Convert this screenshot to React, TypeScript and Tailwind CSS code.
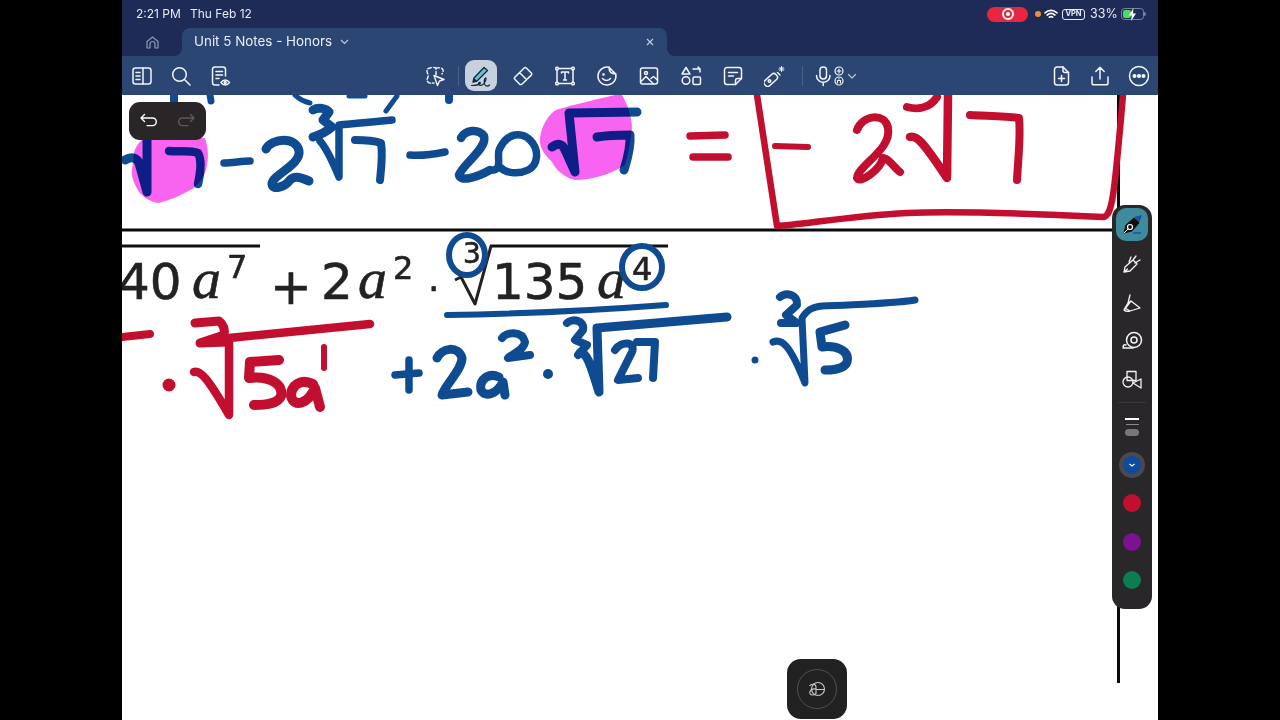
import React from "react";

const Ic = ({ w = 22, h = 22, vb = "0 0 22 22", sw = 1.5, children }: { w?: number; h?: number; vb?: string; sw?: number; children: React.ReactNode }) => (
  <svg width={w} height={h} viewBox={vb} fill="none" stroke="currentColor" strokeWidth={sw} strokeLinecap="round" strokeLinejoin="round">
    {children}
  </svg>
);

const Slot = ({ children, className = "w-[42px]" }: { children: React.ReactNode; className?: string }) => (
  <div className={`flex items-center justify-center shrink-0 ${className}`}>{children}</div>
);

function Toolbar() {
  return (
    <div className="relative h-[39px] flex items-center bg-[#2b4673] text-[#f1f5fa] shrink-0">
      <Slot className="w-[39px]">
        <Ic><rect x="2" y="3" width="18" height="16" rx="2.5" /><path d="M12 3v16M5 7.5h4M5 11h4M5 14.5h4" /></Ic>
      </Slot>
      <Slot className="w-[39px]">
        <Ic><circle cx="9.5" cy="9.5" r="6.8" /><path d="M14.5 14.5 20 20" /></Ic>
      </Slot>
      <Slot className="w-[39px]">
        <Ic><path d="M10 20H6a2.5 2.5 0 0 1-2.5-2.5v-13A2.5 2.5 0 0 1 6 2h8a2.5 2.5 0 0 1 2.5 2.5V11" /><path d="M7 6.5h6.5M7 10h6.5M7 13.5h3" /><path d="M12 17.5s1.8-2.5 4.2-2.5 4.3 2.5 4.3 2.5-1.9 2.5-4.3 2.5-4.2-2.5-4.2-2.5z" /><circle cx="16.2" cy="17.5" r="1" /></Ic>
      </Slot>
      <Slot className="ml-[174.5px] w-[42px]">
        <Ic sw={1.4}><path strokeDasharray="3.5 2.2" d="M12 10V4c0-2-4-2-6-1S3 3 3 6s2 3 1 6-2 3 0 5 3 1 6 1" /><path strokeDasharray="3.5 2.2" d="M12 3c3 0 6-1 7 2 .5 2-.5 3-1 4" /><path d="M10 10.5l10 4-4.500 1.500-2 4.500z" /></Ic>
      </Slot>
      <div className="ml-[2px] w-px h-[20px] bg-[#48618b]" />
      <div className="ml-[6px] w-[32px] h-[31px] rounded-[9px] bg-[#c6d0de] flex items-center justify-center">
        <svg width="24" height="24" viewBox="0 0 24 24" fill="none">
          <path d="M4 18l1-4L15 3.500l3.500 3L8 17z" fill="#67c3d0" stroke="#14233f" strokeWidth="1.300" strokeLinejoin="round" />
          <path d="M4 18l1-4 3 3z" fill="#14233f" />
          <path d="M2.500 21.500c3 0 7-.5 8.500-2s-2-1.500-1.500.5 3 1.500 4.500.5c2-1.500 4-7 2.500-6.500s-2 6 0 7.500c1.500 1 3 .5 4-.5" stroke="#14233f" strokeWidth="1.200" strokeLinecap="round" />
        </svg>
      </div>
      <Slot className="ml-[5px] w-[42px]">
        <Ic><path d="M8 19.500 2.800 14.300a1.500 1.500 0 0 1 0-2.100L12.200 3a1.500 1.500 0 0 1 2.100 0l5 5a1.500 1.500 0 0 1 0 2.100L9.600 19.500zM7.500 7.500l7 7" /></Ic>
      </Slot>
      <Slot>
        <Ic><rect x="3" y="3.500" width="16" height="15" /><rect x="1.800" y="2.300" width="2.400" height="2.400" rx=".8" fill="#2b4673" /><rect x="17.800" y="2.300" width="2.400" height="2.400" rx=".8" fill="#2b4673" /><rect x="1.800" y="17.300" width="2.400" height="2.400" rx=".8" fill="#2b4673" /><rect x="17.800" y="17.300" width="2.400" height="2.400" rx=".8" fill="#2b4673" /><path d="M7.500 8V7h7v1M11 7v8M9.500 15h3" /></Ic>
      </Slot>
      <Slot>
        <Ic><path d="M13 2.300A9 9 0 1 0 19.700 9" /><path d="M13 2.300c0 4 2.500 6.700 6.700 6.700L13 2.300z" /><circle cx="7.500" cy="9.500" r=".6" fill="currentColor" /><path d="M6.500 13.500c2 2.500 6 2.500 8 0" /></Ic>
      </Slot>
      <Slot>
        <Ic><rect x="2.500" y="3" width="17" height="16" rx="2" /><circle cx="8" cy="8" r="1.500" /><path d="m2.500 17 5.500-5.500 7.500 7.500M13 13.500l2.500-2 4 3.500" /></Ic>
      </Slot>
      <Slot>
        <Ic><path d="M6 2.500 10 9H2zM20 4h-7m7 0-2-2m2 2v3" /><circle cx="6" cy="15.500" r="3.800" /><rect x="13" y="12" width="7.500" height="7.500" rx="1.500" /></Ic>
      </Slot>
      <Slot>
        <Ic><path d="M13.500 19.500H5A2.500 2.500 0 0 1 2.500 17V5A2.500 2.500 0 0 1 5 2.500h12A2.500 2.500 0 0 1 19.500 5v8.500z" /><path d="M13.500 19.500v-4a2 2 0 0 1 2-2h4M6.500 7.500h9M6.500 11h5" /></Ic>
      </Slot>
      <Slot>
        <Ic><rect x="-1" y="12" width="15" height="7" rx="2.800" transform="rotate(-42 6 15)" /><circle cx="5.500" cy="16" r="1.300" /><path d="M13.500 7.500l2.500 2.500" /><path d="M17.500 1.500v5M15 4h5M15.700 2.200l3.600 3.600M19.300 2.200l-3.600 3.600" strokeWidth="1" /></Ic>
      </Slot>
      <div className="ml-[6px] w-px h-[20px] bg-[#48618b]" />
      <div className="ml-[11px] flex items-center">
        <Ic w={18} h={22} vb="0 0 18 22"><rect x="6" y="2" width="6.500" height="12" rx="3.200" /><path d="M2.500 10.500c0 9 13.500 9 13.500 0M9.200 18v2.500" /></Ic>
        <Ic w={14} h={22} vb="0 0 14 22" sw={1.200}><circle cx="7" cy="6" r="4" /><path d="M5 6h4M7 4v4" /><circle cx="7" cy="16" r="4" /><path d="M5.500 18v-2.500h3V18M7 13.500v.5" /></Ic>
        <Ic w={12} h={22} vb="0 0 12 22" sw={1.200}><path d="m2.500 9.500 3.500 3.500 3.500-3.500" className="opacity-70" /></Ic>
      </div>
      <div className="ml-auto flex items-center">
        <Slot className="w-[39px]">
          <Ic><path d="M13 2H7a2.500 2.500 0 0 0-2.500 2.500v13A2.500 2.500 0 0 0 7 20h9a2.500 2.500 0 0 0 2.500-2.500V7.500z" /><path d="M13 2v3.500a2 2 0 0 0 2 2h3.500M11.500 10.500v6M8.500 13.500h6" /></Ic>
        </Slot>
        <Slot className="w-[39px]">
          <Ic><path d="M3 12v6a1.800 1.800 0 0 0 1.800 1.800h12.400A1.800 1.800 0 0 0 19 18v-6M11 14V2.500M6.800 6.500 11 2.300l4.200 4.200" /></Ic>
        </Slot>
        <Slot className="w-[39px]">
          <Ic><circle cx="11" cy="11" r="9.500" /><circle cx="6.500" cy="11" r="1.300" fill="currentColor" /><circle cx="11" cy="11" r="1.300" fill="currentColor" /><circle cx="15.500" cy="11" r="1.300" fill="currentColor" /></Ic>
        </Slot>
      </div>
      <div className="absolute left-[360px] top-[38.500px] w-0 h-0 border-x-[5px] border-x-transparent border-t-[4px] border-t-[#2b4673]" />
    </div>
  );
}

const BLUE = "#0f4b90";
const RED = "#c20f2f";

const blue: [string, number][] = [
  ["M174,95 L174,102", 8],
  ["M210,95 L211,101", 7],
  ["M295,95 C300,100 305,102 310,103", 5],
  ["M349,96 L365,96", 5],
  ["M397,96 L386,111", 5],
  ["M449,95 L449,100", 8],
  ["M125,160 C132,156 137,158 139,163 L147,192 L147,140", 9],
  ["M169,151 C180,152 190,150 198,153 C202,160 200,175 198,184", 8.500],
  ["M224,163 C232,163 242,161 250,161", 7.500],
  ["M266,149 C272,138 296,136 299,151 C301,165 272,175 272,184 C272,190 284,188 290,180 C295,175 302,178 309,181", 9],
  ["M313,110 C318,107 326,108 329,112 L323,120 L332,127 C326,132 320,135 313,137", 9],
  ["M320,141 C328,150 334,165 339,177 L339,125 C355,123 375,122 392,120", 7.500],
  ["M355,140 C365,140 375,141 381,143 C383,155 381,170 380,180", 8],
  ["M410,155 C420,156 435,154 445,152", 7.500],
  ["M461,138 C465,130 478,128 484,136 C488,148 462,165 459,175 C460,182 476,178 490,170", 8.500],
  ["M490,170 C505,172 495,155 500,148 C508,132 522,132 530,140 C540,150 538,165 528,170 C518,175 505,173 500,167", 7.500],
  ["M552,147 C558,143 562,143 565,150 L575,172 L569,113 L637,112", 9],
  ["M597,137 C610,135 620,135 630,135 C631,148 627,160 624,170", 9],
  ["M447,315 C520,314 600,310 666,305", 6],
  ["M395,375 L419,373", 7.500],
  ["M409,360 L409,390", 7.500],
  ["M437,358 C442,348 458,345 462,358 C462,370 445,385 442,395 L468,392", 9],
  ["M499,377 C488,372 479,380 481,390 C485,398 497,394 503,382 L505,395", 9],
  ["M502,338 C506,332 522,330 525,342 C524,350 512,354 508,358 L530,355", 8],
  ["M567,323 C572,318 585,320 583,330 L575,340 L587,345 L578,355", 8],
  ["M580,353 C588,352 592,370 599,392 L597,328 L727,317", 9],
  ["M615,350 C622,340 636,342 632,352 L618,380 L638,378", 8],
  ["M637,342 L655,342 L653,378", 8],
  ["M780,297 C786,292 798,294 797,305 L786,315 L797,323 L781,323", 8],
  ["M773,342 C782,338 790,345 805,383 L802,318 C808,308 815,307 822,306 C860,304 890,304 915,300", 7],
  ["M845,325 L820,332 L822,347 C835,345 850,350 847,362 C845,368 835,370 825,370", 9],
];

const red: [string, number][] = [
  ["M690,136 L725,135", 7.500],
  ["M693,157 L728,157", 7.500],
  ["M757,95 L777,226 C800,225 850,216 907,213 C960,211 1040,214 1103,217 C1112,216 1114,200 1123,95", 6.500],
  ["M775,146 L808,147", 6],
  ["M857,130 C862,115 885,112 888,128 C892,150 858,165 857,178 C860,184 880,170 883,158 C888,158 895,168 900,172", 8],
  ["M907,107 C918,110 930,108 937,97", 8],
  ["M910,137 C916,135 922,140 947,178 L948,95", 8.500],
  ["M970,115 C985,116 1005,116 1019,118 C1021,135 1018,160 1017,180", 8],
  ["M122,337 L150,334", 8],
  ["M195,323 L219,321 C224,325 225,330 224,335 L200,343 L228,342", 9],
  ["M194,372 C200,370 208,378 229,415 L229,338 L370,324", 8.500],
  ["M279,360 L250,362 L249,378 C270,375 284,385 281,396 C278,404 265,405 254,405", 10],
  ["M313,384 C300,378 291,386 291,396 C294,408 308,404 315,388 L320,407", 10],
  ["M324,347 L324,368", 6],
];

function Canvas() {
  return (
    <div className="relative flex-1 bg-white overflow-hidden">
      <svg className="absolute inset-0 w-full h-full" viewBox="122 95 1036 625" fill="none" strokeLinecap="round" strokeLinejoin="round">
        <path d="M122,230 H1118" stroke="#0a0a0a" strokeWidth="3" strokeLinecap="butt" />
        <path d="M1118.500,95 V683" stroke="#0a0a0a" strokeWidth="3" strokeLinecap="butt" />
        <path d="M122,246 H260 M490,246 H668" stroke="#111" strokeWidth="3" strokeLinecap="butt" />
        <path d="M455,280 L461,277 L475,304 L491,246" stroke="#222" strokeWidth="3" strokeLinecap="butt" />
        <g fill="#222" stroke="#222" strokeWidth="0.6">
          <text x="118" y="299" className="font-['DejaVu_Sans'] text-[50px]">40</text>
          <text x="192" y="298" className="font-['Liberation_Serif'] italic text-[58px]">a</text>
          <text x="227" y="278" className="font-['DejaVu_Sans'] text-[32px]">7</text>
          <text x="270" y="304" className="font-['DejaVu_Sans'] text-[50px]">+</text>
          <text x="321" y="299" className="font-['DejaVu_Sans'] text-[50px]">2</text>
          <text x="358" y="298" className="font-['Liberation_Serif'] italic text-[58px]">a</text>
          <text x="393" y="279" className="font-['DejaVu_Sans'] text-[32px]">2</text>
          <text x="428" y="301" className="font-['DejaVu_Sans'] text-[36px]">·</text>
          <text x="463" y="263" className="font-['DejaVu_Sans'] text-[28px]">3</text>
          <text x="492" y="299" className="font-['DejaVu_Sans'] text-[50px]">135</text>
          <text x="597" y="298" className="font-['Liberation_Serif'] italic text-[58px]">a</text>
          <text x="632" y="280" className="font-['DejaVu_Sans'] text-[32px]">4</text>
        </g>
        <ellipse cx="467" cy="255" rx="18" ry="20" stroke={BLUE} strokeWidth="6" />
        <ellipse cx="642" cy="267" rx="20" ry="21" stroke={BLUE} strokeWidth="6" />
        {blue.map(([d, w], i) => <path key={i} d={d} stroke={BLUE} strokeWidth={w} />)}
        {red.map(([d, w], i) => <path key={i} d={d} stroke={RED} strokeWidth={w} />)}
        <circle cx="169" cy="385" r="6.500" fill={RED} />
        <circle cx="548" cy="374" r="5" fill={BLUE} />
        <circle cx="755" cy="360" r="3.500" fill={BLUE} />
        <path className="mix-blend-multiply" fill="#f864f0" d="M134,152 C138,142 142,138 150,138 L205,138 C209,150 208,158 207,165 C205,178 198,184 194,188 C180,196 170,200 159,203 C150,202 142,196 139,192 C135,185 131,178 132,170 Z" />
        <path className="mix-blend-multiply" fill="#f864f0" d="M540,138 C542,125 548,115 556,110 C575,104 595,100 615,95 L622,95 C628,105 632,118 632,128 C630,145 628,155 625,165 C610,175 590,180 575,180 C565,178 556,170 552,162 C545,155 539,148 540,138 Z" />
      </svg>

      <div className="absolute left-[7px] top-[7px] w-[77px] h-[38px] rounded-[11px] bg-[#2a2627] flex items-center justify-between px-[10px] text-white">
        <Ic w={20} h={20} vb="0 0 20 20" sw={1.400}><path d="M5.500 3.500 2 7 5.500 10.500M2 7h11.500a3.800 3.800 0 0 1 0 7.600H8" /></Ic>
        <span className="text-[#5d5a5b]">
          <Ic w={20} h={20} vb="0 0 20 20" sw={1.400}><path d="M14.500 3.500 18 7 14.500 10.500M18 7H6.500a3.800 3.800 0 0 0 0 7.600H12" /></Ic>
        </span>
      </div>

      <div className="absolute left-[990px] top-[110px] w-[40px] h-[404px] rounded-[13px] bg-[#29272a] flex flex-col items-center text-[#f4f4f4] pt-[3px]">
        <div className="w-[32px] h-[33px] rounded-[10px] bg-[#3d8b9d] flex items-center justify-center">
          <svg width="24" height="24" viewBox="0 0 24 24" fill="none">
            <path d="M14 4l8-2-3 8z" fill="#1c4f9c" />
            <path d="M4 20l2-8 8-7 5 5-7 8z" fill="#101010" stroke="#101010" />
            <circle cx="10" cy="14" r="2.500" fill="none" stroke="#fff" strokeWidth="1.200" />
            <path d="M4 20l4.500-4.500" stroke="#fff" strokeWidth="1" />
            <path d="M13 20h8" stroke="#1c4f9c" strokeWidth="1.500" />
          </svg>
        </div>
        <div className="mt-[7px] h-[31px] flex items-center">
          <Ic sw={1.300}><path d="M3 19l1-5 8-7 4 4-7 7zM3 19l3.500-3M8 9l2-5M12 7l3-4M14 10l5-3" /></Ic>
        </div>
        <div className="mt-[8px] h-[31px] flex items-center">
          <Ic sw={1.300}><path d="M3 18c2 2 6 1 6 1l10-3-9-7zM3 18l1-2 3-5 3-2M4 16l5 3M7 11 9 3" /></Ic>
        </div>
        <div className="mt-[7px] h-[31px] flex items-center">
          <Ic><circle cx="13" cy="10" r="7.500" /><circle cx="13" cy="10" r="3" /><path d="M2 18h10M3 18c-2-2 0-4 2-3" /></Ic>
        </div>
        <div className="mt-[8px] h-[31px] flex items-center">
          <Ic sw={1.300}><rect x="6" y="2.500" width="9" height="9" /><circle cx="7" cy="13" r="5" /><path d="M12 14l8-4v9z" /></Ic>
        </div>
        <div className="mt-[7px] w-[28px] h-px bg-[#38363a]" />
        <div className="mt-[15px] w-[14px] h-[2px] bg-white" />
        <div className="mt-[4px] w-[13px] h-px bg-[#8b8b8b]" />
        <div className="mt-[4px] w-[14px] h-[7px] rounded-full bg-[#77767a]" />
        <div className="mt-[16px] w-[26px] h-[26px] rounded-full bg-[#4a494e] flex items-center justify-center">
          <div className="w-[18px] h-[18px] rounded-full bg-[#0f4b9c] flex items-center justify-center">
            <svg width="8" height="8" viewBox="0 0 8 8" fill="none" stroke="#fff" strokeWidth="1.200"><path d="m1.500 3 2.500 2 2.500-2" /></svg>
          </div>
        </div>
        <div className="mt-[16px] w-[18px] h-[18px] rounded-full bg-[#c20f2f]" />
        <div className="mt-[21px] w-[18px] h-[18px] rounded-full bg-[#7b128f]" />
        <div className="mt-[20px] w-[18px] h-[18px] rounded-full bg-[#0d7c52]" />
      </div>

      <div className="absolute left-[665px] top-[564px] w-[60px] h-[60px] rounded-[14px] bg-[#212121] flex items-center justify-center">
        <div className="w-[40px] h-[40px] rounded-full border-[1.5px] border-[#505050] flex items-center justify-center">
          <svg width="20" height="18" viewBox="0 0 20 18" fill="none" stroke="#c8c8c8" strokeWidth="1.100">
            <circle cx="11" cy="9" r="6.500" />
            <path d="M2.500 6C4 3.500 9 3.500 9 7v7M9 9c-7-1-8 6-3.500 6 2 0 3.500-1 3.500-2.500M9 9.500h8.500" />
          </svg>
        </div>
      </div>
    </div>
  );
}

export default function App() {
  return (
    <div className="w-[1280px] h-[720px] bg-black flex justify-center overflow-hidden font-['Inter',sans-serif]">
      <div className="w-[1036px] h-full flex flex-col">
        <div className="h-[28px] bg-[#1e2b56] flex items-center text-[#e6eaf2] text-[12px] shrink-0">
          <span className="ml-[14px] w-[54px]">2:21 PM</span>
          <span>Thu Feb 12</span>
          <div className="ml-auto flex items-center">
            <div className="w-[41px] h-[15px] rounded-full bg-[#e8263f] flex items-center justify-center">
              <div className="w-[12px] h-[12px] rounded-full border-2 border-white flex items-center justify-center">
                <div className="w-[4px] h-[4px] rounded-full bg-white" />
              </div>
            </div>
            <div className="ml-[7px] w-[6px] h-[6px] rounded-full bg-[#ee8d3c]" />
            <svg className="ml-[3px]" width="14" height="11" viewBox="0 0 14 11" fill="none" stroke="#fff" strokeWidth="1.700" strokeLinecap="round">
              <path d="M1 3.800c3.500-3.200 8.500-3.200 12 0M3.200 6c2.300-2 5.300-2 7.600 0M5.400 8.200c1-.8 2.200-.8 3.200 0" />
            </svg>
            <div className="ml-[4px] w-[23px] h-[11px] rounded-[3px] border border-[#e6eaf2] flex items-center justify-center text-[7.500px] font-bold leading-none">VPN</div>
            <span className="ml-[5px] w-[30px] text-[12.500px]">33%</span>
            <div className="ml-[1px] mr-[14px] w-[23px] h-[12px] rounded-[3.500px] border border-[#7a8299] relative flex items-center">
              <div className="ml-[1px] w-[8px] h-[8px] rounded-[2px] bg-[#4fd964]" />
              <svg className="absolute left-[6px] top-[-1.500px]" width="9" height="13" viewBox="0 0 9 13"><path d="M5.500 0 0.800 7.500h3L3 13l5-7.500H5z" fill="#fff" /></svg>
              <div className="absolute right-[-3px] top-[3px] w-[2px] h-[4px] rounded-r bg-[#7a8299]" />
            </div>
          </div>
        </div>
        <div className="h-[28px] flex bg-[linear-gradient(#1e2b56_50%,#2b4673_50%)] shrink-0">
          <div className="w-[60px] bg-[#1e2b56] rounded-br-[8px] flex items-center justify-center text-[#8a9ab8]">
            <Ic w={15} h={15} vb="0 0 15 15" sw={1.200}><path d="M2 13V6.500L7.500 2 13 6.500V13h-3V9a2.500 2.500 0 0 0-5 0v4z" /></Ic>
          </div>
          <div className="w-[485px] bg-[#2b4673] rounded-t-[8px] flex items-center text-[#e8edf5] pl-[12px] pr-[13px]">
            <span className="text-[13.400px] leading-none">Unit 5 Notes - Honors</span>
            <svg className="ml-[8px]" width="9" height="6" viewBox="0 0 9 6" fill="none" stroke="#c4cfdf" strokeWidth="1.100"><path d="m1 1 3.500 3.500L8 1" /></svg>
            <svg className="ml-auto" width="8" height="8" viewBox="0 0 8 8" fill="none" stroke="#c4cfdf" strokeWidth="1.100"><path d="m1 1 6 6M7 1 1 7" /></svg>
          </div>
          <div className="flex-1 bg-[#1e2b56] rounded-bl-[8px]" />
        </div>
        <Toolbar />
        <Canvas />
      </div>
    </div>
  );
}
